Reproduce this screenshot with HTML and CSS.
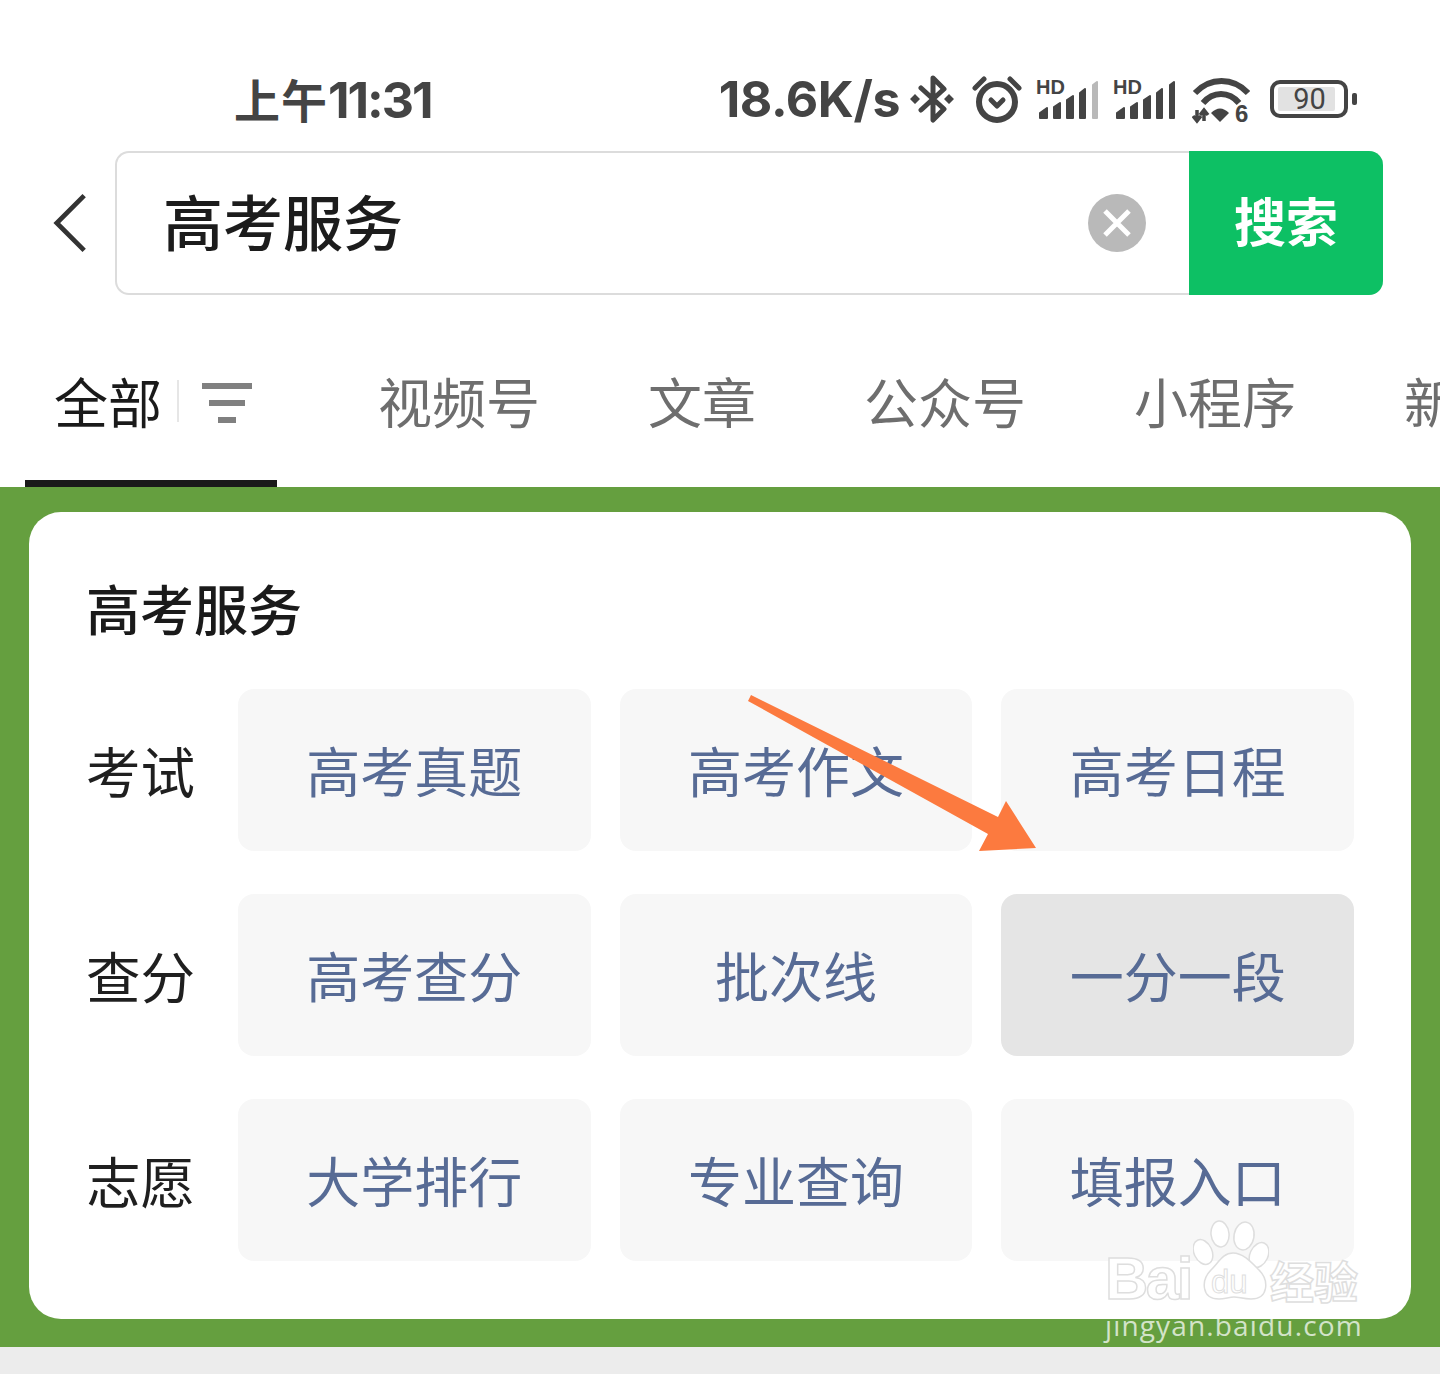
FILE: index.html
```html
<!DOCTYPE html>
<html lang="zh-CN">

<head>
    <meta charset="UTF-8">
    <title>高考服务</title>
    <link rel="stylesheet" href="styles.css">
</head>

<body>
    <div class="page">
        <!-- status bar -->
        <div class="status-bar">
            <span class="clock"><span class="clock-cn">上午</span>11:31</span>
            <div class="status-right">
                <span class="net-speed">18.6K/s</span>
                <svg class="ico-bt" viewBox="0 0 44 48">
                    <path d="M11 13 34 34 23 45V3L34 14 11 35" />
                    <path class="dot" d="M5 19l5 5-5 5-5-5zM39 19l5 5-5 5-5-5z" />
                </svg>
                <svg class="ico-alarm" viewBox="0 0 50 48">
                    <circle cx="25" cy="27" r="18" />
                    <path class="check" d="M19 25l6 6 6-6" />
                    <path class="ear" d="M3 13 12 4M47 13 38 4" />
                </svg>
                <svg class="ico-signal" viewBox="0 -6 63 46">
                    <text x="0" y="14">HD</text>
                    <path d="M4 38h7V28l-7 5zM18 38h6V23l-6 4zM31 38h6V16l-6 4zM44 38h5V9l-5 4z" />
                    <path class="off" d="M57 38h4V2l-4 3z" />
                </svg>
                <svg class="ico-signal" viewBox="0 -6 63 46">
                    <text x="0" y="14">HD</text>
                    <path d="M4 38h7V28l-7 5zM18 38h6V23l-6 4zM31 38h6V16l-6 4zM44 38h5V9l-5 4zM57 38h4V2l-4 3z" />
                </svg>
                <svg class="ico-wifi" viewBox="0 0 58 52">
                    <path d="M3 16C18 0 41 0 56 16" />
                    <path d="M11 26C21 14 37 14 47 26" />
                    <path class="dot" d="M19 36Q28 27 37 36L28 45Z" />
                    <path class="thin" d="M5 33v11M1 39l4 5 4-5M12 44V33M8 38l4-5 4 5" />
                    <text x="43" y="45">6</text>
                </svg>
                <div class="battery">
                    <div class="battery-body">
                        <span class="battery-level">90</span>
                    </div>
                    <div class="battery-cap"></div>
                </div>
            </div>
        </div>

        <!-- search -->
        <div class="search-row">
            <svg class="back" viewBox="0 0 36 62">
                <path d="M33 2 4 31l29 29" />
            </svg>
            <div class="search-box">
                <span class="search-text">高考服务</span>
                <div class="clear-btn">
                    <svg viewBox="0 0 30 30">
                        <path d="M3 3l24 24M27 3 3 27" />
                    </svg>
                </div>
                <div class="search-btn">搜索</div>
            </div>
        </div>

        <!-- tabs -->
        <div class="tabs">
            <div class="tab tab-all">
                <span>全部</span>
                <i class="tab-sep"></i>
                <div class="filter">
                    <i></i><i></i><i></i>
                </div>
            </div>
            <div class="tab">视频号</div>
            <div class="tab">文章</div>
            <div class="tab">公众号</div>
            <div class="tab">小程序</div>
            <div class="tab">新闻</div>
        </div>

        <!-- green area -->
        <div class="content">
            <div class="card">
                <h2 class="card-title">高考服务</h2>
                <div class="grid">
                    <div class="label">考试</div>
                    <div class="cell">高考真题</div>
                    <div class="cell">高考作文</div>
                    <div class="cell">高考日程</div>

                    <div class="label">查分</div>
                    <div class="cell">高考查分</div>
                    <div class="cell">批次线</div>
                    <div class="cell cell-active">一分一段</div>

                    <div class="label">志愿</div>
                    <div class="cell">大学排行</div>
                    <div class="cell">专业查询</div>
                    <div class="cell">填报入口</div>
                </div>
            </div>
        </div>
        <div class="page-foot"></div>

        <!-- annotation arrow -->
        <svg class="arrow" viewBox="0 0 300 165">
            <polygon points="4,1 251,123 259,107 289,154 232,157 241,140 1,7" />
        </svg>

        <!-- watermark -->
        <div class="watermark">
            <div class="wm-top">
                <span class="wm-bai">Bai</span>
                <div class="wm-paw">
                    <svg viewBox="0 0 76 82">
                        <ellipse cx="10" cy="32" rx="9" ry="13" transform="rotate(-25 10 32)" />
                        <ellipse cx="27" cy="14" rx="9" ry="13" transform="rotate(-6 27 14)" />
                        <ellipse cx="51" cy="16" rx="10" ry="14" transform="rotate(10 51 16)" />
                        <ellipse cx="66" cy="35" rx="9" ry="13" transform="rotate(25 66 35)" />
                        <path d="M40 33C30 33 26 42 18 50 8 60 8 79 26 79 32 79 36 77 41 77 46 77 50 79 58 79 76 79 76 60 66 50 58 42 50 33 40 33Z" />
                    </svg>
                    <span class="wm-du">du</span>
                </div>
                <span class="wm-jy">经验</span>
            </div>
            <div class="wm-url">jingyan.baidu.com</div>
        </div>
    </div>
</body>

</html>
```

FILE: styles.css
```css
body {
    margin: 0;
    background: #fff;
    font-family: "Noto Sans CJK SC", "Noto Sans", sans-serif;
}

.page {
    position: relative;
    width: 1440px;
    height: 1374px;
    overflow: hidden;
}

/* status bar */
.status-bar {
    box-sizing: border-box;
    height: 151px;
    padding: 69px 83px 22px 234px;
    display: flex;
    justify-content: space-between;
    align-items: center;
    color: #444;
}

.clock,
.net-speed {
    font-family: Inter, "Noto Sans CJK SC", sans-serif;
    font-weight: 700;
    font-size: 50px;
    line-height: 60px;
    white-space: nowrap;
}

.net-speed {
    letter-spacing: -0.4px;
}

.clock {
    letter-spacing: -2px;
}

.clock-cn {
    font-family: "Noto Sans CJK SC", sans-serif;
    font-size: 46px;
    font-weight: 700;
    letter-spacing: 1px;
}

.status-right {
    display: flex;
    align-items: center;
}

.status-right svg {
    display: block;
    flex: none;
}

.ico-bt {
    width: 44px;
    height: 48px;
    margin-left: 10px;
    fill: none;
    stroke: #444;
    stroke-width: 5px;
    stroke-linejoin: round;
    stroke-linecap: round;
}

.ico-bt .dot {
    fill: #444;
    stroke: none;
}

.ico-alarm {
    width: 50px;
    height: 48px;
    margin-left: 18px;
    fill: none;
    stroke: #444;
    stroke-width: 6px;
    stroke-linecap: round;
    stroke-linejoin: round;
}

.ico-alarm .check,
.ico-alarm .ear {
    stroke-width: 5px;
}

.ico-signal {
    width: 63px;
    height: 46px;
    margin: -4px 0 0 14px;
    fill: #444;
    stroke: #444;
    stroke-width: 2px;
    stroke-linejoin: round;
}

.ico-signal text {
    stroke: none;
    font-family: "Liberation Sans", sans-serif;
    font-weight: 700;
    font-size: 20px;
}

.ico-signal .off {
    fill: #b9b9b9;
    stroke: #b9b9b9;
}

.ico-wifi {
    width: 58px;
    height: 52px;
    margin: 8px 0 0 16px;
    fill: none;
    stroke: #444;
    stroke-width: 6px;
}

.ico-wifi .dot {
    fill: #444;
    stroke: none;
}

.ico-wifi .thin {
    stroke-width: 3.5px;
}

.ico-wifi text {
    fill: #444;
    stroke: none;
    font-family: "Liberation Sans", sans-serif;
    font-weight: 700;
    font-size: 24px;
}

.battery {
    display: flex;
    align-items: center;
    margin-left: 20px;
}

.battery-body {
    box-sizing: border-box;
    width: 78px;
    height: 38px;
    border: 4px solid #444;
    border-radius: 10px;
    padding: 3px 4px;
    display: flex;
}

.battery-level {
    width: 57px;
    padding-left: 6px;
    box-sizing: border-box;
    background: #e2e2e2;
    border-radius: 2px;
    text-align: center;
    font-family: Roboto, sans-serif;
    font-size: 29px;
    line-height: 24px;
    color: #444;
}

.battery-cap {
    width: 5px;
    height: 12px;
    margin-left: 4px;
    background: #444;
    border-radius: 2px;
}

/* search */
.search-row {
    height: 144px;
    padding-left: 53px;
    padding-right: 57px;
    display: flex;
    align-items: center;
}

.back {
    flex: none;
    width: 34px;
    height: 62px;
    margin-right: 28px;
    fill: none;
    stroke: #333;
    stroke-width: 5px;
}

.search-box {
    flex: 1;
    box-sizing: border-box;
    height: 144px;
    border: 2px solid #dcdcdc;
    border-right: none;
    border-radius: 14px;
    padding-left: 46px;
    display: flex;
    align-items: center;
}

.search-text {
    flex: 1;
    font-size: 60px;
    font-weight: 500;
    color: #1c1c1c;
    line-height: 80px;
    margin-top: -7px;
}

.clear-btn {
    width: 58px;
    height: 58px;
    margin-right: 43px;
    border-radius: 50%;
    background: #b9b9b9;
    display: flex;
    align-items: center;
    justify-content: center;
}

.clear-btn svg {
    width: 30px;
    height: 30px;
    fill: none;
    stroke: #fff;
    stroke-width: 5px;
}

.search-btn {
    width: 194px;
    height: 144px;
    margin: -2px 0;
    background: #0dc064;
    border-radius: 0 14px 14px 0;
    color: #fff;
    font-size: 52px;
    font-weight: 700;
    line-height: 138px;
    text-align: center;
}

/* tabs */
.tabs {
    box-sizing: border-box;
    height: 192px;
    padding-left: 25px;
    display: flex;
    gap: 108px;
    overflow: hidden;
}

.tab {
    flex: none;
    padding-top: 68px;
    font-size: 54px;
    line-height: 76px;
    color: #6e6e6e;
    white-space: nowrap;
}

.tab-all {
    box-sizing: border-box;
    width: 252px;
    height: 192px;
    margin-right: -7px;
    padding-left: 29px;
    display: flex;
    align-items: flex-start;
    color: #1a1a1a;
    border-bottom: 7px solid #1a1a1a;
}

.tab-sep {
    width: 2px;
    height: 42px;
    margin: 17px 0 0 15px;
    background: #e6e6e6;
}

.filter {
    width: 50px;
    margin: 20px 0 0 23px;
    display: flex;
    flex-direction: column;
    align-items: center;
    gap: 11px;
}

.filter i {
    display: block;
    height: 6px;
    width: 50px;
    background: #808080;
}

.filter i:nth-child(2) {
    width: 36px;
}

.filter i:nth-child(3) {
    width: 18px;
}

/* green area */
.content {
    box-sizing: border-box;
    height: 860px;
    padding: 25px 29px 28px;
    background: #659f3f;
}

.card {
    box-sizing: border-box;
    height: 807px;
    padding: 64px 57px 58px;
    background: #fff;
    border-radius: 32px;
}

.card-title {
    margin: 0 0 49px;
    font-size: 54px;
    font-weight: 500;
    line-height: 64px;
    color: #1a1a1a;
}

.grid {
    display: grid;
    grid-template-columns: 123px repeat(3, 1fr);
    grid-auto-rows: 162px;
    gap: 43px 29px;
}

.label {
    display: flex;
    align-items: center;
    padding-bottom: 2px;
    font-size: 54.5px;
    color: #1f1f1f;
}

.cell {
    display: flex;
    align-items: center;
    justify-content: center;
    padding-bottom: 2px;
    background: #f7f7f7;
    border-radius: 16px;
    font-size: 54px;
    color: #576b95;
}

.cell-active {
    background: #e5e5e5;
}

.page-foot {
    height: 27px;
    background: #ececec;
}

/* arrow over the grid */
.arrow {
    position: absolute;
    left: 747px;
    top: 694px;
    width: 300px;
    height: 165px;
    fill: #fc7a3f;
}

/* watermark */
.watermark {
    position: absolute;
    left: 1105px;
    top: 1220px;
    width: 258px;
}

.wm-top {
    display: flex;
    align-items: flex-end;
    height: 82px;
}

.wm-bai,
.wm-jy,
.wm-du {
    color: #fff;
    -webkit-text-stroke: 1.5px #dedede;
    font-family: "Liberation Sans", "Noto Sans CJK SC", sans-serif;
}

.wm-bai {
    width: 88px;
    margin-bottom: -7px;
    font-size: 60px;
    font-weight: 700;
    line-height: 60px;
    letter-spacing: -2.5px;
}

.wm-paw {
    position: relative;
    width: 76px;
    height: 82px;
    flex: none;
}

.wm-paw svg {
    display: block;
    width: 76px;
    height: 82px;
    fill: #fff;
    stroke: #dedede;
    stroke-width: 1.5px;
}

.wm-du {
    position: absolute;
    left: 18px;
    top: 42px;
    font-size: 33px;
    line-height: 40px;
    -webkit-text-stroke: 1px #dedede;
}

.wm-jy {
    margin-left: 1px;
    font-size: 44px;
    line-height: 44px;
    font-family: "Noto Sans CJK SC", sans-serif;
    font-weight: 700;
}

.wm-url {
    margin: 5px 0 0 0;
    font-family: "Open Sans", sans-serif;
    font-size: 28px;
    line-height: 36px;
    letter-spacing: 1.15px;
    color: rgba(255, 255, 255, 0.72);
    white-space: nowrap;
}
```
